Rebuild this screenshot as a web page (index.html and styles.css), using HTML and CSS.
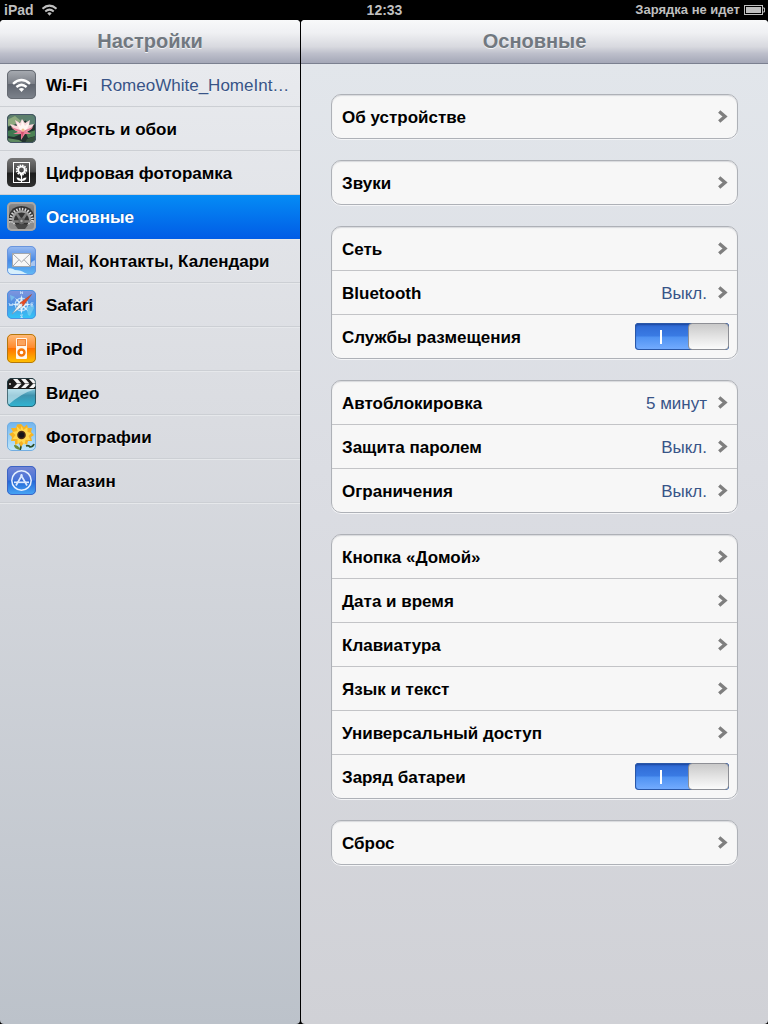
FILE: index.html
```html
<!DOCTYPE html>
<html lang="ru">
<head>
<meta charset="utf-8">
<meta name="viewport" content="width=device-width, initial-scale=1">
<title>Настройки</title>
<link rel="stylesheet" href="styles.css">
</head>
<body>
<svg class="defs" width="0" height="0" aria-hidden="true">
  <defs>
    <linearGradient id="steel" x1="0" y1="0" x2="0" y2="1"><stop offset="0" stop-color="#a9adb3"/><stop offset=".48" stop-color="#7b7f87"/><stop offset=".5" stop-color="#60656f"/><stop offset="1" stop-color="#7d838c"/></linearGradient>
    <linearGradient id="coal" x1="0" y1="0" x2="0" y2="1"><stop offset="0" stop-color="#777"/><stop offset=".48" stop-color="#484848"/><stop offset=".52" stop-color="#1d1d1d"/><stop offset="1" stop-color="#303030"/></linearGradient>
    <linearGradient id="metal" x1="0" y1="0" x2="0" y2="1"><stop offset="0" stop-color="#8f8f8f"/><stop offset=".5" stop-color="#6a6a6a"/><stop offset="1" stop-color="#9d9d9d"/></linearGradient>
    <linearGradient id="sky" x1="0" y1="0" x2="0" y2="1"><stop offset="0" stop-color="#9dbdf0"/><stop offset=".5" stop-color="#4789e6"/><stop offset="1" stop-color="#62bcf6"/></linearGradient>
    <linearGradient id="sea" x1="0" y1="0" x2="0" y2="1"><stop offset="0" stop-color="#8395dd"/><stop offset=".45" stop-color="#4e8fe2"/><stop offset="1" stop-color="#31c8f8"/></linearGradient>
    <linearGradient id="orange" x1="0" y1="0" x2="0" y2="1"><stop offset="0" stop-color="#ffbd7c"/><stop offset=".47" stop-color="#ff8b2d"/><stop offset=".5" stop-color="#ff7200"/><stop offset="1" stop-color="#ffc400"/></linearGradient>
    <linearGradient id="film" x1="0" y1="0" x2="0" y2="1"><stop offset=".35" stop-color="#8fd0e2"/><stop offset=".6" stop-color="#3f93ae"/><stop offset="1" stop-color="#2fb6d4"/></linearGradient>
    <linearGradient id="day" x1="0" y1="0" x2="0" y2="1"><stop offset="0" stop-color="#6fb4ee"/><stop offset="1" stop-color="#c3e9fc"/></linearGradient>
    <linearGradient id="store" x1="0" y1="0" x2="0" y2="1"><stop offset="0" stop-color="#7585d4"/><stop offset=".48" stop-color="#4874d8"/><stop offset=".52" stop-color="#2467d6"/><stop offset="1" stop-color="#48a8f6"/></linearGradient>
    <clipPath id="tile"><rect width="29" height="29" rx="5"/></clipPath>
    <symbol id="chevron" viewBox="0 0 12 14"><path d="M2.200 1.500 8 6.500 2.200 11.500" fill="none" stroke="#7f7f7f" stroke-width="3.400"/></symbol>
    <symbol id="wave" viewBox="0 0 18 13"><path d="M1.400 5.200Q9-1.600 16.600 5.200M4.400 8.100Q9 4.200 13.600 8.100" fill="none" stroke="currentColor" stroke-width="2.200"/><path d="M6.600 9.900Q9 8.200 11.400 9.900L9 12.600Z" fill="currentColor"/></symbol>
  </defs>
</svg>

<header class="status">
  <div class="status-left"><span>iPad</span><svg class="status-wifi" viewBox="0 0 18 13" role="img" aria-label="Wi-Fi"><use href="#wave"/></svg></div>
  <time class="clock">12:33</time>
  <div class="status-right"><span>Зарядка не идет</span><svg class="battery" viewBox="0 0 21 10" aria-hidden="true"><rect x=".5" y=".5" width="18" height="9" fill="none" stroke="#bfbfbf"/><rect x="2" y="2" width="15" height="6" fill="#bfbfbf"/><path d="M19 3h1.500v4H19" fill="none" stroke="#bfbfbf"/></svg></div>
</header>

<div class="split">
  <aside class="pane sidebar">
    <h1 class="bar">Настройки</h1>
    <nav>
      <ul class="menu">
        <li><a class="item" href="#wifi">
          <svg class="icon" viewBox="0 0 29 29" aria-hidden="true"><rect width="29" height="29" rx="5" fill="url(#steel)"/><use href="#wave" x="4.500" y="8" width="20" height="14.500" color="#fff"/><rect x=".5" y=".5" width="28" height="28" rx="4.500" fill="none" stroke="#666b73"/></svg>
          <span>Wi-Fi</span><span class="network">RomeoWhite_HomeInt…</span></a></li>
        <li><a class="item" href="#wallpaper">
          <svg class="icon" viewBox="0 0 29 29" aria-hidden="true"><g clip-path="url(#tile)"><rect width="29" height="29" fill="#22332f"/><path d="M0 0h29v9L20 6 10 10 0 13Z" fill="#5d7f6c"/><path d="M0 6 8 2l6 5-8 4-6 1Z" fill="#8da97e"/><path d="M18 4 29 1v9l-8 2Z" fill="#5a8070"/><path d="M0 17 9 15l5 5-7 3-7-1Z" fill="#3f7750"/><path d="M19 19 29 16v6l-8 2Z" fill="#4b8253"/><path d="M0 24 12 26l5 3H0Z" fill="#5f8b60"/><path d="M20 25 29 22v7H18Z" fill="#37523d"/><path d="M15 19Q6 17 3 10L10 12 8 6 13 9 15 5 18 9 23 6 22 11 27 10Q24 17 17 19Z" fill="#f8d7da"/><path d="M15 18Q11 14 10 8L14 12 15 6 18 12 22 8Q22 14 17 18Z" fill="#fff6f2"/><path d="M4 13Q8 18 13 17L6 20 14 20 14 26 18 20 24 20 19 17Q24 17 26 13L16 17Z" fill="#ea8299"/><path d="M14 18 15 24 17 18" fill="#d4506f"/><circle cx="16" cy="16" r="1.500" fill="#f0c08e"/></g><rect x=".5" y=".5" width="28" height="28" rx="4.500" fill="none" stroke="#456"/></svg>
          <span>Яркость и обои</span></a></li>
        <li><a class="item" href="#frame">
          <svg class="icon" viewBox="0 0 29 29" aria-hidden="true"><rect width="29" height="29" rx="5" fill="url(#coal)"/><rect x="6.500" y="4.500" width="16" height="20" fill="none" stroke="#fff"/><circle cx="14.500" cy="12" r="4.700" fill="none" stroke="#fff" stroke-width="1.800" stroke-dasharray="1.500 .96"/><circle cx="14.500" cy="12" r="3.300" fill="none" stroke="#fff" stroke-width="1.800"/><path d="M14.500 16v8" stroke="#fff" stroke-width="1.200"/><path d="M14.500 23Q10 23 9.500 19.500 14 19.500 14.500 23 15 19.500 19.500 19.500 19 23 14.500 23" fill="#fff"/></svg>
          <span>Цифровая фоторамка</span></a></li>
        <li><a class="item selected" href="#general" aria-current="page">
          <svg class="icon" viewBox="0 0 29 29" aria-hidden="true"><rect width="29" height="29" rx="5" fill="url(#metal)"/><g clip-path="url(#tile)"><path d="M2 14Q4 4 14.500 4T27 14V21H2Z" fill="#333"/><circle cx="14.500" cy="18" r="10.800" fill="none" stroke="#d8d8d8" stroke-width="3" stroke-dasharray="1.500 1.330"/><circle cx="14.500" cy="18" r="8.700" fill="#333" stroke="#9c9c9c" stroke-width="2.200"/><path d="M14.500 19 9.500 11.500M14.500 19 19.500 11.500M5 19.500h19" stroke="#7c7c7c" stroke-width="2.400"/><path d="M1 20Q6 18 8 22L12 28H1ZM28 20Q23 18 21 22L17 28H28Z" fill="#8c8c8c"/><path d="M2 20Q6 19 8 23M27 20Q23 19 21 23" fill="none" stroke="#ccc" stroke-width="1.500" stroke-dasharray="1.400 1"/><path d="M8 23Q14.500 21 21 23L18 27H11Z" fill="#474747"/><circle cx="14.500" cy="19" r="3.200" fill="#656565"/><circle cx="14.500" cy="19" r="1.200" fill="#aaa"/></g><rect x="1" y="1" width="27" height="27" rx="4" fill="none" stroke="#a7a7a7" stroke-width="2"/></svg>
          <span>Основные</span></a></li>
        <li><a class="item" href="#mail">
          <svg class="icon" viewBox="0 0 29 29" aria-hidden="true"><g clip-path="url(#tile)"><rect width="29" height="29" fill="url(#sky)"/><path d="M0 23Q4 21 8 24 14 24 18 27L23 29H0Z" fill="#d6effc"/><path d="M24 17Q27 13 29 15v5L24 20Z" fill="#a9c6ef"/></g><rect x="5.500" y="7.500" width="18" height="13" fill="#f7f7f7" stroke="#a2a7ae"/><path d="M6 8 14.500 16 23 8M6 20 12 13.700M23 20 17 13.700" fill="none" stroke="#a2a5aa"/><rect x=".5" y=".5" width="28" height="28" rx="4.500" fill="none" stroke="#6995dd"/></svg>
          <span>Mail, Контакты, Календари</span></a></li>
        <li><a class="item" href="#safari">
          <svg class="icon" viewBox="0 0 29 29" aria-hidden="true"><rect width="29" height="29" rx="5" fill="url(#sea)"/><path d="M19 17 26 15 27 18 23 26 21 25ZM3 5 8 7 4 11Z" fill="#83d7f2" opacity=".6"/><circle cx="14.500" cy="14.500" r="6.300" fill="none" stroke="#b9dcf7" stroke-width="1.200"/><path d="m14.500 5 1.800 7.700 7.700 1.800-7.700 1.800-1.800 7.700-1.800-7.700L5 14.500l7.700-1.800ZM8 8l6.500 4.500L21 8l-4.500 6.500L21 21l-6.500-4.500L8 21l4.500-6.500Z" fill="#e1f1fd"/><path d="M13.500 4V1.500l2 2.500V1.500M16 25h-2.500l2 2.500h-2M2 13l1 3 1-2 1 2 1-3M26.500 13H24v3h2.500M24 14.500h2" fill="none" stroke="#c4dff8" stroke-width=".9"/><path d="M5 24 13 13 16 16Z" fill="#f4f4f4" stroke="#7b93ab" stroke-width=".6"/><path d="M24.500 4.500 13 13 16 16Z" fill="#e74b23" stroke="#b04426" stroke-width=".6"/><circle cx="14.500" cy="14.500" r="1" fill="#c8dded"/><rect x=".5" y=".5" width="28" height="28" rx="4.500" fill="none" stroke="#4d91df"/></svg>
          <span>Safari</span></a></li>
        <li><a class="item" href="#ipod">
          <svg class="icon" viewBox="0 0 29 29" aria-hidden="true"><rect width="29" height="29" rx="5" fill="url(#orange)"/><rect x="9" y="4" width="11" height="21" rx="1" fill="#fff7eb"/><rect x="10.500" y="5.500" width="8" height="6" fill="#fba45c" stroke="#ee8436"/><circle cx="14.500" cy="18.500" r="3" fill="#fff" stroke="#f47608" stroke-width="2.400"/><rect x=".5" y=".5" width="28" height="28" rx="4.500" fill="none" stroke="#b4770d"/></svg>
          <span>iPod</span></a></li>
        <li><a class="item" href="#video">
          <svg class="icon" viewBox="0 0 29 29" aria-hidden="true"><g clip-path="url(#tile)"><rect width="29" height="29" fill="url(#film)"/><path d="M0 11H29Q14 15 0 28Z" fill="#d2edf4" opacity=".65"/><path d="M0 0h29v11H0Z" fill="#1b1b1b"/><path d="M6 1h4.500l4 4.500H10ZM14 1h4.500l4 4.500H18ZM22 1h4.500l4 4.500H26ZM10 6h4.500l-4 4H6ZM18 6h4.500l-4 4H14ZM26 6h4.500l-4 4H22Z" fill="#f5f5f5"/><circle cx="3" cy="6" r="1" fill="#ddd"/></g><rect x=".5" y=".5" width="28" height="28" rx="4.500" fill="none" stroke="#27444f" stroke-opacity=".7"/></svg>
          <span>Видео</span></a></li>
        <li><a class="item" href="#photos">
          <svg class="icon" viewBox="0 0 29 29" aria-hidden="true"><rect width="29" height="29" rx="5" fill="url(#day)"/><path d="M13 20Q15 24 13 28M19 24Q22 23 23 25 26 25 27 22" fill="none" stroke="#2b4c26" stroke-width="1.700"/><path d="M13 28Q7 27 7 23 12 23 13 28Z" fill="#6a8b3a"/><path d="M14 2 17 5 20 2.500 21 6 25 6 24 10 27 13 24 15 25 19 21 19 20 23 17 21 14 25 12 21 8 23 8 19 4 19 5 15 2 12 6 10 4 6 9 6 10 2.500Z" fill="#f7b323"/><path d="m14.500 4 2 4 4-3 0 5 4 1-3 3 2 4-5 0-1 5-3-4-4 3 0-5-5 0 3-4-3-3 5-1-1-5 4 4Z" fill="#ffd850"/><circle cx="14.500" cy="13" r="4.300" fill="#4c2c14"/><circle cx="14.500" cy="13" r="2.800" fill="#15151a"/><rect x=".5" y=".5" width="28" height="28" rx="4.500" fill="none" stroke="#73ade0"/></svg>
          <span>Фотографии</span></a></li>
        <li><a class="item" href="#store">
          <svg class="icon" viewBox="0 0 29 29" aria-hidden="true"><rect width="29" height="29" rx="5" fill="url(#store)"/><circle cx="14.500" cy="14.500" r="9.700" fill="none" stroke="#e6f1ff" stroke-width="1.500"/><path d="M15.300 8.500 9 19.500M13.700 8.500 20 19.500" fill="none" stroke="#dceaff" stroke-width="1.700"/><path d="M7 16.300h15" stroke="#dceaff" stroke-width="1.700"/><rect x=".5" y=".5" width="28" height="28" rx="4.500" fill="none" stroke="#3c64c4"/></svg>
          <span>Магазин</span></a></li>
      </ul>
    </nav>
  </aside>

  <main class="pane detail">
    <h2 class="bar">Основные</h2>
    <div class="groups">
      <section class="group">
        <a class="row" href="#about"><span>Об устройстве</span><svg class="chevron" aria-hidden="true"><use href="#chevron"/></svg></a>
      </section>
      <section class="group">
        <a class="row" href="#sounds"><span>Звуки</span><svg class="chevron" aria-hidden="true"><use href="#chevron"/></svg></a>
      </section>
      <section class="group">
        <a class="row" href="#network"><span>Сеть</span><svg class="chevron" aria-hidden="true"><use href="#chevron"/></svg></a>
        <a class="row" href="#bluetooth"><span>Bluetooth</span><span class="value">Выкл.</span><svg class="chevron" aria-hidden="true"><use href="#chevron"/></svg></a>
        <label class="row"><span>Службы размещения</span><input class="switch" type="checkbox" role="switch" checked></label>
      </section>
      <section class="group">
        <a class="row" href="#autolock"><span>Автоблокировка</span><span class="value">5 минут</span><svg class="chevron" aria-hidden="true"><use href="#chevron"/></svg></a>
        <a class="row" href="#passcode"><span>Защита паролем</span><span class="value">Выкл.</span><svg class="chevron" aria-hidden="true"><use href="#chevron"/></svg></a>
        <a class="row" href="#restrictions"><span>Ограничения</span><span class="value">Выкл.</span><svg class="chevron" aria-hidden="true"><use href="#chevron"/></svg></a>
      </section>
      <section class="group">
        <a class="row" href="#home"><span>Кнопка «Домой»</span><svg class="chevron" aria-hidden="true"><use href="#chevron"/></svg></a>
        <a class="row" href="#date"><span>Дата и время</span><svg class="chevron" aria-hidden="true"><use href="#chevron"/></svg></a>
        <a class="row" href="#keyboard"><span>Клавиатура</span><svg class="chevron" aria-hidden="true"><use href="#chevron"/></svg></a>
        <a class="row" href="#language"><span>Язык и текст</span><svg class="chevron" aria-hidden="true"><use href="#chevron"/></svg></a>
        <a class="row" href="#accessibility"><span>Универсальный доступ</span><svg class="chevron" aria-hidden="true"><use href="#chevron"/></svg></a>
        <label class="row"><span>Заряд батареи</span><input class="switch" type="checkbox" role="switch" checked></label>
      </section>
      <section class="group">
        <a class="row" href="#reset"><span>Сброс</span><svg class="chevron" aria-hidden="true"><use href="#chevron"/></svg></a>
      </section>
    </div>
  </main>
</div>
</body>
</html>
```
FILE: styles.css
```css
*, *::before, *::after { box-sizing: border-box; }

body {
  margin: 0;
  min-height: 100vh;
  display: flex;
  flex-direction: column;
  background: #000;
  color: #000;
  font: bold 17px/20px "Liberation Sans", Arial, sans-serif;
}

a { color: inherit; text-decoration: none; }

.defs { position: absolute; }

/* Status bar */
.status {
  display: grid;
  grid-template-columns: 1fr auto 1fr;
  align-items: center;
  height: 20px;
  padding: 0 3px 0 4px;
  color: #bfbfbf;
  font-size: 14px;
  line-height: 18px;
}
.status-left { display: flex; align-items: center; gap: 7px; }
.status-wifi { width: 17px; height: 12px; }
.status-right {
  display: flex;
  align-items: center;
  justify-content: flex-end;
  gap: 4px;
  font-size: 13px;
}
.battery { width: 21px; height: 10px; }

/* Two panes */
.split {
  flex: 1;
  display: grid;
  grid-template-columns: 300px 1fr;
  gap: 1px;
}
.pane { min-width: 0; overflow: hidden; border-radius: 4px; }
.sidebar { background: linear-gradient(#e8eaee 43px, #dadce1 40%, #bcc2ca); }
.detail { background: linear-gradient(#e2e6eb 43px, #dbdde3 45%, #d0d1d6); }

.bar {
  position: relative;
  margin: 0;
  height: 43px;
  background: linear-gradient(#f8f9fa, #eff0f3 30%, #d8d9df 62%, #bdbfcb 78%, #a4a7b7);
  box-shadow: 0 1px 0 #7b8090;
  color: #717880;
  font-size: 20px;
  line-height: 43px;
  text-align: center;
  text-shadow: 0 1px 0 #f2f3f6;
}

/* Sidebar menu */
.menu { margin: 0; padding: 0; list-style: none; }
.item {
  display: flex;
  align-items: center;
  gap: 10px;
  height: 44px;
  padding: 0 10px 0 7px;
  border-bottom: 1px solid #cccfd4;
  box-shadow: 0 1px 0 #e6e8eb;
  text-shadow: 0 1px 0 #f0f1f3;
  white-space: nowrap;
}
.item > span, .row > span { padding-top: 2px; }
.icon { flex: none; width: 29px; height: 29px; }
.network {
  margin-left: 3px;
  color: #385487;
  font-weight: normal;
}
.selected {
  border-bottom-color: #015de6;
  background: linear-gradient(#058cf5, #015de6);
  color: #fff;
  text-shadow: 0 -1px 0 #1260b8;
}

/* Grouped rows */
.groups { display: grid; gap: 21px; padding: 31px 30px; }
.group {
  overflow: hidden;
  border: 1px solid #aeb1b7;
  border-radius: 10px;
  background: #f7f7f7;
  box-shadow: 0 1px 0 #f4f5f7, inset 0 1px 1px #d8d9dc;
}
.row {
  display: flex;
  align-items: center;
  height: 44px;
  padding: 0 8px 0 10px;
  border-bottom: 1px solid #c3c4c7;
}
.row:last-child { height: 43px; border-bottom: 0; }
.row > :first-child { flex: 1; }
.value { margin-right: 10px; color: #385487; font-weight: normal; }
.chevron { width: 12px; height: 14px; }

.switch {
  appearance: none;
  display: flex;
  align-items: center;
  justify-content: space-between;
  width: 94px;
  height: 27px;
  margin: 0;
  padding-left: 25px;
  border-radius: 4px;
  background: linear-gradient(#2e68d2, #3a7be4 48%, #4f92f2 52%, #75adff);
  box-shadow: inset 0 0 0 1px #2a58a8, inset 0 2px 2px #1c459b;
}
.switch::before { content: ""; width: 2px; height: 14px; background: #fff; }
.switch::after {
  content: "";
  width: 41px;
  height: 27px;
  border: 1px solid #8d8f95;
  border-radius: 4px;
  background: linear-gradient(#c9c9c9, #e3e3e3 50%, #fbfbfb);
}
```
